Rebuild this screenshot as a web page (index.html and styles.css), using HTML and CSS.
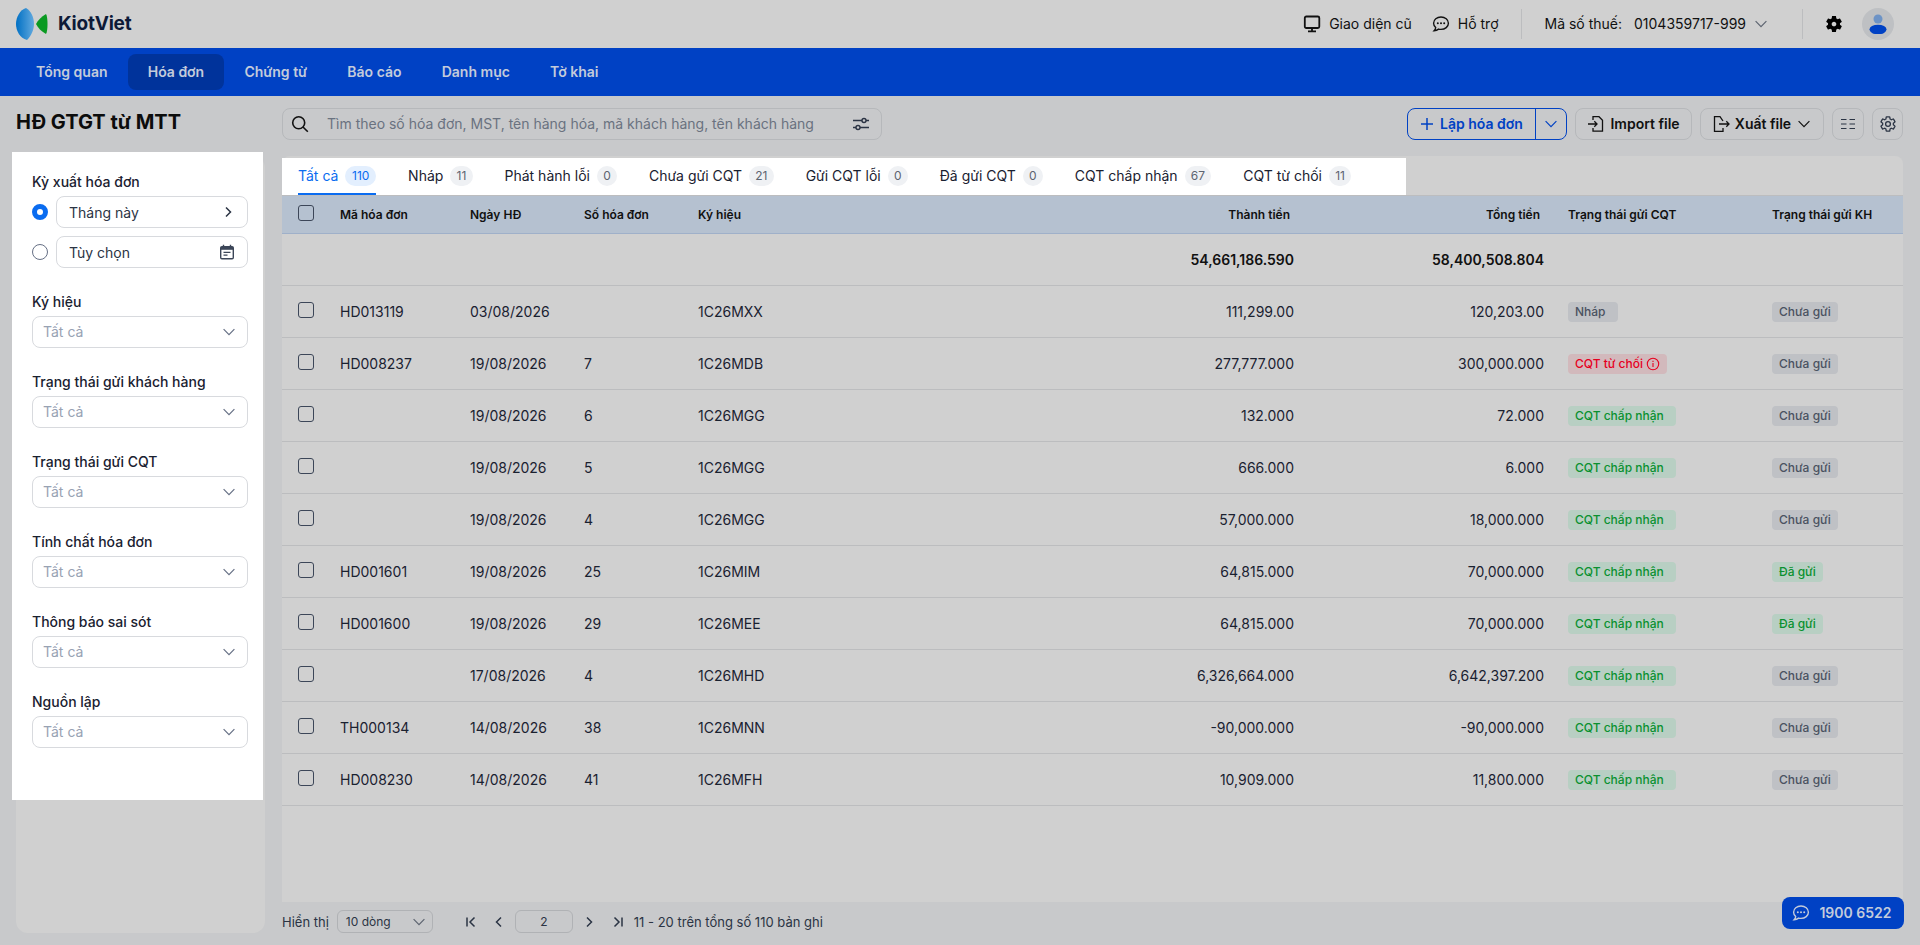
FILE: index.html
```html
<!DOCTYPE html>
<html lang="vi">
<head>
<meta charset="utf-8">
<title>HĐ GTGT từ MTT - KiotViet</title>
<link rel="stylesheet" href="styles.css">
</head>
<body>

<svg class="defs" width="0" height="0" aria-hidden="true">
	<symbol id="i-down" viewBox="0 0 12 12"><path d="M.6 3.200 6 8.600 11.400 3.200" fill="none" stroke="currentColor" stroke-width="1.200"/></symbol>
	<symbol id="i-right" viewBox="0 0 12 12"><path d="M3 1.500 7.500 6 3 10.500" fill="none" stroke="currentColor" stroke-width="1.500"/></symbol>
	<symbol id="i-left" viewBox="0 0 12 12"><path d="M8 1.500 3.500 6 8 10.500" fill="none" stroke="currentColor" stroke-width="1.500"/></symbol>
	<symbol id="i-chat" viewBox="0 0 18 18"><path d="M9 2C4.900 2 1.600 4.700 1.600 8.200c0 1.700.8 3.200 2.100 4.300-.1 1.200-.6 2.200-1.600 3.200 1.800 0 3.300-.6 4.500-1.600.7.2 1.500.3 2.400.3 4.100 0 7.400-2.700 7.400-6.200S13.100 2 9 2z" fill="none" stroke="currentColor" stroke-width="1.400"/><circle cx="5.800" cy="8.200" r="1" fill="currentColor"/><circle cx="9" cy="8.200" r="1" fill="currentColor"/><circle cx="12.200" cy="8.200" r="1" fill="currentColor"/></symbol>
</svg>

<!-- top bar -->
<header class="topbar">
	<div class="brand">
		<svg class="brand-logo" width="32" height="32" viewBox="0 0 32 32">
			<defs><linearGradient id="lens" x1="0" y1="0" x2="1" y2="0"><stop offset="0" stop-color="#0070c4"/><stop offset="1" stop-color="#62a9de"/></linearGradient></defs>
			<path d="M10 0C4 2 0 9 0 16s4 14 11 16C15 28 18 22 18 16 18 9 15 3 10 0z" fill="url(#lens)"/>
			<path d="M30 6C25 9 22 12 20 16c2 4 5 7 10 10 2-3 2-17 0-20z" fill="#0a9a22"/>
		</svg>
		<span class="brand-name">KiotViet</span>
	</div>
	<div class="topbar-right">
		<a class="top-link">
			<svg width="18" height="18" viewBox="0 0 18 18"><rect x="1.800" y="1.500" width="14.500" height="11.500" rx="1.500" fill="none" stroke="#111" stroke-width="1.800"/><path d="M9 13v3M5 16.300h8" stroke="#111" stroke-width="1.800"/></svg>
			Giao diện cũ
		</a>
		<a class="top-link">
			<svg class="ic-dark" width="18" height="18"><use href="#i-chat"/></svg>
			Hỗ trợ
		</a>
		<span class="top-divider"></span>
		<div class="tax">
			<span>Mã số thuế:</span>
			<span class="tax-no">0104359717-999</span>
			<svg class="ic-gray" width="12" height="12"><use href="#i-down"/></svg>
		</div>
		<span class="top-divider"></span>
		<svg class="top-gear" width="20" height="20" viewBox="0 0 24 24"><path fill-rule="evenodd" d="M19.140 12.940c.04-.3.06-.61.06-.94 0-.32-.02-.64-.07-.94l2.030-1.580c.18-.14.23-.41.12-.61l-1.920-3.320c-.12-.22-.37-.29-.59-.22l-2.390.96c-.5-.38-1.030-.7-1.620-.94l-.36-2.540c-.04-.24-.24-.41-.48-.41h-3.840c-.24 0-.43.17-.47.41l-.36 2.540c-.59.24-1.130.57-1.620.94l-2.390-.96c-.22-.08-.47 0-.59.22L2.740 8.870c-.12.21-.08.47.12.61l2.030 1.580c-.05.3-.09.63-.09.94s.02.64.07.94l-2.030 1.580c-.18.14-.23.41-.12.61l1.920 3.320c.12.22.37.29.59.22l2.390-.96c.5.38 1.030.7 1.620.94l.36 2.540c.05.24.24.41.48.41h3.840c.24 0 .44-.17.47-.41l.36-2.540c.59-.24 1.130-.56 1.620-.94l2.390.96c.22.08.47 0 .59-.22l1.920-3.320c.12-.22.07-.47-.12-.61l-2.010-1.580zM12 14.800c-1.540 0-2.800-1.260-2.800-2.800s1.260-2.800 2.800-2.800 2.800 1.260 2.800 2.800-1.260 2.800-2.800 2.800z"/></svg>
		<div class="avatar">
			<svg width="18" height="20" viewBox="0 0 18 20"><circle cx="9" cy="5" r="4.500" fill="#6d93c6"/><ellipse cx="9" cy="15.500" rx="8.500" ry="4.800" fill="#0041c4"/></svg>
		</div>
	</div>
</header>

<!-- main nav -->
<nav class="mainnav">
	<a class="nav-item">Tổng quan</a>
	<a class="nav-item active">Hóa đơn</a>
	<a class="nav-item">Chứng từ</a>
	<a class="nav-item">Báo cáo</a>
	<a class="nav-item">Danh mục</a>
	<a class="nav-item">Tờ khai</a>
</nav>

<div class="content">

	<!-- left column -->
	<aside class="side">
		<h1 class="page-title">HĐ GTGT từ MTT</h1>
		<div class="side-card">
			<div class="filter-panel">
				<div class="filter-first">
					<div class="filter-label">Kỳ xuất hóa đơn</div>
					<div class="radio-row">
						<span class="radio on"></span>
						<div class="field">
							<span>Tháng này</span>
							<svg class="ic-slate" width="12" height="12"><use href="#i-right"/></svg>
						</div>
					</div>
					<div class="radio-row">
						<span class="radio"></span>
						<div class="field">
							<span>Tùy chọn</span>
							<svg width="16" height="16" viewBox="0 0 16 16"><rect x="1.700" y="2.700" width="12.600" height="12" rx="1.200" fill="none" stroke="#3c4658" stroke-width="1.400"/><path d="M1.700 3h12.600v2.800H1.700z" fill="#3c4658"/><path d="M4.500.8v2.500M11.500.8v2.500" stroke="#3c4658" stroke-width="1.400"/><path d="M4.500 8.300h7M4.500 11.200h4" stroke="#3c4658" stroke-width="1.300"/></svg>
						</div>
					</div>
				</div>
				<div class="filter-group">
					<div class="filter-label">Ký hiệu</div>
					<div class="field select"><span>Tất cả</span><svg width="12" height="12"><use href="#i-down"/></svg></div>
				</div>
				<div class="filter-group">
					<div class="filter-label">Trạng thái gửi khách hàng</div>
					<div class="field select"><span>Tất cả</span><svg width="12" height="12"><use href="#i-down"/></svg></div>
				</div>
				<div class="filter-group">
					<div class="filter-label">Trạng thái gửi CQT</div>
					<div class="field select"><span>Tất cả</span><svg width="12" height="12"><use href="#i-down"/></svg></div>
				</div>
				<div class="filter-group">
					<div class="filter-label">Tính chất hóa đơn</div>
					<div class="field select"><span>Tất cả</span><svg width="12" height="12"><use href="#i-down"/></svg></div>
				</div>
				<div class="filter-group">
					<div class="filter-label">Thông báo sai sót</div>
					<div class="field select"><span>Tất cả</span><svg width="12" height="12"><use href="#i-down"/></svg></div>
				</div>
				<div class="filter-group">
					<div class="filter-label">Nguồn lập</div>
					<div class="field select"><span>Tất cả</span><svg width="12" height="12"><use href="#i-down"/></svg></div>
				</div>
			</div>
		</div>
	</aside>

	<!-- right column -->
	<main class="main">
		<div class="toolbar">
			<div class="search">
				<svg width="18" height="18" viewBox="0 0 18 18"><circle cx="7.700" cy="7.700" r="6" fill="none" stroke="#111" stroke-width="1.600"/><path d="M12 12l4.800 4.800" stroke="#111" stroke-width="1.600"/></svg>
				<span class="search-text">Tìm theo số hóa đơn, MST, tên hàng hóa, mã khách hàng, tên khách hàng</span>
				<svg width="18" height="18" viewBox="0 0 18 18" fill="none" stroke="#2b3444" stroke-width="1.400"><path d="M1 5.500h9M14 5.500h3M1 12.500h3M8 12.500h9"/><circle cx="12" cy="5.500" r="2"/><circle cx="6" cy="12.500" r="2"/></svg>
			</div>
			<div class="actions">
				<div class="btn-split">
					<a class="btn-create">
						<svg width="14" height="14" viewBox="0 0 14 14"><path d="M7 1v12M1 7h12" stroke="#0041c4" stroke-width="1.500"/></svg>
						Lập hóa đơn
					</a>
					<a class="btn-caret"><svg width="12" height="12"><use href="#i-down"/></svg></a>
				</div>
				<a class="btn btn-import">
					<svg width="18" height="18" viewBox="0 0 18 18" fill="none" stroke="#111" stroke-width="1.300"><path d="M6 5V1.700h6l3.500 3.500v11H6V13"/><path d="M1 9h9M7.300 6.300 10 9l-2.700 2.700"/></svg>
					Import file
				</a>
				<a class="btn btn-export">
					<svg width="18" height="18" viewBox="0 0 18 18" fill="none" stroke="#111" stroke-width="1.300"><path d="M11 6 8 1.700H2.500v14.600H11V13"/><path d="M7 9h10M14.300 6.300 17 9l-2.700 2.700"/></svg>
					Xuất file
					<svg class="export-caret" width="12" height="12"><use href="#i-down"/></svg>
				</a>
				<a class="btn btn-icon">
					<svg width="14" height="12" viewBox="0 0 14 12" stroke="#2b3444" stroke-width="1.200"><path d="M0 1.500h5.500M8.500 1.500H14M0 6h5.500M8.500 6H14M0 10.500h5.500M8.500 10.500H14"/></svg>
				</a>
				<a class="btn btn-icon btn-gear">
					<svg width="18" height="18" viewBox="0 0 24 24" fill="none" stroke="#2b3444" stroke-width="1.700"><path d="M19.140 12.940c.04-.3.06-.61.06-.94 0-.32-.02-.64-.07-.94l2.030-1.580c.18-.14.23-.41.12-.61l-1.920-3.320c-.12-.22-.37-.29-.59-.22l-2.390.96c-.5-.38-1.030-.7-1.620-.94l-.36-2.540c-.04-.24-.24-.41-.48-.41h-3.840c-.24 0-.43.17-.47.41l-.36 2.540c-.59.24-1.130.57-1.620.94l-2.390-.96c-.22-.08-.47 0-.59.22L2.740 8.870c-.12.21-.08.47.12.61l2.030 1.580c-.05.3-.09.63-.09.94s.02.64.07.94l-2.030 1.580c-.18.14-.23.41-.12.61l1.920 3.320c.12.22.37.29.59.22l2.390-.96c.5.38 1.030.7 1.620.94l.36 2.540c.05.24.24.41.48.41h3.840c.24 0 .44-.17.47-.41l.36-2.540c.59-.24 1.130-.56 1.620-.94l2.390.96c.22.08.47 0 .59-.22l1.920-3.320c.12-.22.07-.47-.12-.61l-2.010-1.580z"/><circle cx="12" cy="12" r="3.200"/></svg>
				</a>
			</div>
		</div>

		<section class="panel">
			<div class="tabs">
				<a class="tab active">Tất cả <span class="count">110</span></a>
				<a class="tab">Nháp <span class="count">11</span></a>
				<a class="tab">Phát hành lỗi <span class="count">0</span></a>
				<a class="tab">Chưa gửi CQT <span class="count">21</span></a>
				<a class="tab">Gửi CQT lỗi <span class="count">0</span></a>
				<a class="tab">Đã gửi CQT <span class="count">0</span></a>
				<a class="tab">CQT chấp nhận <span class="count">67</span></a>
				<a class="tab">CQT từ chối <span class="count">11</span></a>
			</div>
			<table class="grid">
				<colgroup>
					<col class="c-check"><col class="c-code"><col class="c-date"><col class="c-no"><col class="c-sign"><col class="c-amount"><col class="c-total"><col class="c-cqt"><col class="c-kh">
				</colgroup>
				<thead>
					<tr>
						<th class="check"><span class="box"></span></th>
						<th>Mã hóa đơn</th>
						<th>Ngày HĐ</th>
						<th>Số hóa đơn</th>
						<th>Ký hiệu</th>
						<th class="num">Thành tiền</th>
						<th class="num">Tổng tiền</th>
						<th class="cqt">Trạng thái gửi CQT</th>
						<th>Trạng thái gửi KH</th>
					</tr>
				</thead>
				<tbody>
					<tr class="sum">
						<td></td><td></td><td></td><td></td><td></td>
						<td class="num">54,661,186.590</td>
						<td class="num">58,400,508.804</td>
						<td></td><td></td>
					</tr>
					<tr>
						<td class="check"><span class="box"></span></td>
						<td>HD013119</td><td>03/08/2026</td><td></td><td>1C26MXX</td>
						<td class="num">111,299.00</td><td class="num">120,203.00</td>
						<td class="cqt"><span class="tag gray wide">Nháp</span></td>
						<td><span class="tag gray">Chưa gửi</span></td>
					</tr>
					<tr>
						<td class="check"><span class="box"></span></td>
						<td>HD008237</td><td>19/08/2026</td><td>7</td><td>1C26MDB</td>
						<td class="num">277,777.000</td><td class="num">300,000.000</td>
						<td class="cqt"><span class="tag red">CQT từ chối
							<svg width="14" height="14" viewBox="0 0 14 14" fill="none" stroke="#e6001e" stroke-width="1.100"><circle cx="7" cy="7" r="5.700"/><path d="M7 6v4M7 3.800v1.200"/></svg>
						</span></td>
						<td><span class="tag gray">Chưa gửi</span></td>
					</tr>
					<tr>
						<td class="check"><span class="box"></span></td>
						<td></td><td>19/08/2026</td><td>6</td><td>1C26MGG</td>
						<td class="num">132.000</td><td class="num">72.000</td>
						<td class="cqt"><span class="tag green wide">CQT chấp nhận</span></td>
						<td><span class="tag gray">Chưa gửi</span></td>
					</tr>
					<tr>
						<td class="check"><span class="box"></span></td>
						<td></td><td>19/08/2026</td><td>5</td><td>1C26MGG</td>
						<td class="num">666.000</td><td class="num">6.000</td>
						<td class="cqt"><span class="tag green wide">CQT chấp nhận</span></td>
						<td><span class="tag gray">Chưa gửi</span></td>
					</tr>
					<tr>
						<td class="check"><span class="box"></span></td>
						<td></td><td>19/08/2026</td><td>4</td><td>1C26MGG</td>
						<td class="num">57,000.000</td><td class="num">18,000.000</td>
						<td class="cqt"><span class="tag green wide">CQT chấp nhận</span></td>
						<td><span class="tag gray">Chưa gửi</span></td>
					</tr>
					<tr>
						<td class="check"><span class="box"></span></td>
						<td>HD001601</td><td>19/08/2026</td><td>25</td><td>1C26MIM</td>
						<td class="num">64,815.000</td><td class="num">70,000.000</td>
						<td class="cqt"><span class="tag green wide">CQT chấp nhận</span></td>
						<td><span class="tag green">Đã gửi</span></td>
					</tr>
					<tr>
						<td class="check"><span class="box"></span></td>
						<td>HD001600</td><td>19/08/2026</td><td>29</td><td>1C26MEE</td>
						<td class="num">64,815.000</td><td class="num">70,000.000</td>
						<td class="cqt"><span class="tag green wide">CQT chấp nhận</span></td>
						<td><span class="tag green">Đã gửi</span></td>
					</tr>
					<tr>
						<td class="check"><span class="box"></span></td>
						<td></td><td>17/08/2026</td><td>4</td><td>1C26MHD</td>
						<td class="num">6,326,664.000</td><td class="num">6,642,397.200</td>
						<td class="cqt"><span class="tag green wide">CQT chấp nhận</span></td>
						<td><span class="tag gray">Chưa gửi</span></td>
					</tr>
					<tr>
						<td class="check"><span class="box"></span></td>
						<td>TH000134</td><td>14/08/2026</td><td>38</td><td>1C26MNN</td>
						<td class="num">-90,000.000</td><td class="num">-90,000.000</td>
						<td class="cqt"><span class="tag green wide">CQT chấp nhận</span></td>
						<td><span class="tag gray">Chưa gửi</span></td>
					</tr>
					<tr>
						<td class="check"><span class="box"></span></td>
						<td>HD008230</td><td>14/08/2026</td><td>41</td><td>1C26MFH</td>
						<td class="num">10,909.000</td><td class="num">11,800.000</td>
						<td class="cqt"><span class="tag green wide">CQT chấp nhận</span></td>
						<td><span class="tag gray">Chưa gửi</span></td>
					</tr>
				</tbody>
			</table>
		</section>

		<div class="pager">
			<span>Hiển thị</span>
			<div class="page-size"><span>10 dòng</span><svg width="12" height="12"><use href="#i-down"/></svg></div>
			<div class="page-nav">
				<svg width="12" height="12" viewBox="0 0 12 12" fill="none" stroke="#2b3444" stroke-width="1.500"><path d="M2 1.500v9M9.500 1.500 5 6l4.500 4.500"/></svg>
				<svg class="ic-slate" width="12" height="12"><use href="#i-left"/></svg>
				<div class="page-input">2</div>
				<svg class="ic-slate" width="12" height="12"><use href="#i-right"/></svg>
				<svg width="12" height="12" viewBox="0 0 12 12" fill="none" stroke="#2b3444" stroke-width="1.500"><path d="M10 1.500v9M2.500 1.500 7 6l-4.500 4.500"/></svg>
			</div>
			<span class="page-info">11 - 20 trên tổng số 110 bản ghi</span>
		</div>
	</main>
</div>

<a class="hotline">
	<svg width="18" height="18"><use href="#i-chat"/></svg>
	1900 6522
</a>

</body>
</html>
```

FILE: styles.css
```css
/* Reset */
* {
	margin:0;
	padding:0;
	box-sizing:border-box;
}
html, body {
	height:100%;
	overflow:hidden;
}
body {
	background:#c8c9cb;
	color:#1a2130;
	font:14px/20px Inter, "Noto Sans", "Liberation Sans", sans-serif;
	display:flex;
	flex-direction:column;
}
a {
	color:inherit;
	text-decoration:none;
}
svg {
	flex:none;
	display:block;
}
.defs {
	position:absolute;
}

/* Top bar */
.topbar {
	height:48px;
	flex:none;
	background:#d0d0d0;
	display:flex;
	align-items:center;
	justify-content:space-between;
	padding:0 26px 0 16px;
}
.brand {
	display:flex;
	align-items:center;
	gap:10px;
}
.brand-name {
	font-size:19px;
	font-weight:700;
	color:#0d1a38;
	letter-spacing:-.2px;
}
.topbar-right {
	display:flex;
	align-items:center;
}
.top-link {
	display:flex;
	align-items:center;
	gap:8px;
	margin-right:20px;
	color:#111;
}
.top-divider {
	width:1px;
	height:30px;
	background:#bcbdbf;
}
.topbar-right .top-link + .top-divider {
	margin-left:2px;
}
.tax {
	display:flex;
	align-items:center;
	gap:12px;
	margin:0 35px 0 23px;
	color:#111;
}
.tax svg {
	margin-left:-3px;
}
.ic-gray {
	color:#5d6470;
}
.ic-dark {
	color:#111;
}
.ic-slate {
	color:#2b3444;
}
.top-gear {
	margin-left:21px;
	margin-right:18px;
}
.avatar {
	width:32px;
	height:32px;
	border-radius:50%;
	background:#bec0c3;
	display:flex;
	align-items:center;
	justify-content:center;
}

/* Main nav */
.mainnav {
	height:48px;
	flex:none;
	background:#0041c4;
	display:flex;
	align-items:center;
	padding-left:16px;
}
.nav-item {
	height:36px;
	line-height:36px;
	padding:0 20.100px;
	border-radius:8px;
	color:#c3cbdb;
	font-weight:600;
}
.nav-item.active {
	background:#00339b;
}

/* Page */
.content {
	flex:1;
	min-height:0;
	display:flex;
	gap:17px;
	padding:12px 17px 12px 16px;
}
.side {
	width:249px;
	flex:none;
	display:flex;
	flex-direction:column;
	gap:16px;
}
.page-title {
	height:32px;
	font-size:20px;
	line-height:28px;
	font-weight:700;
	color:#0c0c0c;
}
.side-card {
	flex:1;
	background:#d0d0d0;
	border-radius:12px;
}
.filter-panel {
	width:251px;
	height:648px;
	margin:-4px 0 0 -4px;
	padding:20px 15px 0 20px;
	background:#fff;
}
.filter-label {
	font-weight:500;
	color:#1a2130;
	line-height:20px;
}
.filter-first .filter-label {
	margin-bottom:4px;
}
.radio-row {
	display:flex;
	align-items:center;
	gap:8px;
	margin-bottom:8px;
}
.radio-row span:not(.radio) {
	padding-top:2px;
}
.radio {
	width:16px;
	height:16px;
	flex:none;
	border-radius:50%;
	border:1px solid #667085;
	background:#fff;
}
.radio.on {
	border:5px solid #0a6cf0;
}
.field {
	flex:1;
	height:32px;
	border:1px solid #d8dade;
	border-radius:8px;
	display:flex;
	align-items:center;
	justify-content:space-between;
	padding:0 12px;
	color:#2b3444;
}
.select {
	padding-left:10px;
	color:#98a2b3;
}
.select svg {
	color:#667085;
}
.filter-group {
	margin-top:24px;
}
.filter-group .filter-label {
	height:24px;
}

/* Toolbar */
.main {
	flex:1;
	min-width:0;
	display:flex;
	flex-direction:column;
	gap:16px;
}
.toolbar {
	height:32px;
	flex:none;
	display:flex;
	justify-content:space-between;
}
.search {
	width:600px;
	border:1px solid #b6b8bb;
	border-radius:8px;
	display:flex;
	align-items:center;
	padding:0 11px 0 8px;
}
.search-text {
	flex:1;
	padding-left:18px;
	color:#6a7280;
}
.actions {
	display:flex;
	gap:8px;
}
.btn-split {
	width:160px;
	display:flex;
	border:1px solid #0041c4;
	border-radius:8px;
	color:#0041c4;
	font-weight:600;
}
.btn-create {
	flex:1;
	display:flex;
	align-items:center;
	gap:6px;
	padding-left:12px;
	border-right:1px solid #0041c4;
}
.btn-caret {
	width:30px;
	display:flex;
	align-items:center;
	justify-content:center;
}
.btn {
	display:flex;
	align-items:center;
	justify-content:center;
	gap:5px;
	border:1px solid #b6b8bb;
	border-radius:8px;
	color:#111;
	font-weight:600;
}
.btn-import {
	width:117px;
}
.btn-export {
	width:124px;
	padding-right:2px;
}
.export-caret {
	margin-left:2px;
}
.btn-icon {
	width:32px;
}
.btn-gear {
	width:31px;
}

/* Panel, tabs */
.panel {
	flex:1;
	min-height:0;
	background:#d0d0d0;
	border-radius:8px 8px 0 0;
	padding-top:2px;
}
.tabs {
	width:1124px;
	height:37px;
	background:#fff;
	display:flex;
	gap:32px;
	padding-left:16px;
}
.tab {
	height:37px;
	display:flex;
	align-items:center;
	gap:7px;
	padding-bottom:2px;
	color:#1a2130;
}
.tab.active {
	color:#0a6cf0;
	border-bottom:2px solid #0a6cf0;
	padding-bottom:0;
}
.count {
	min-width:20px;
	height:20px;
	padding:0 6.200px;
	border-radius:10px;
	background:#eff1f4;
	color:#5d6470;
	font-size:12px;
	line-height:20px;
	text-align:center;
}
.tab.active .count {
	padding:0 6.700px;
	background:#e3effe;
	color:#0a6cf0;
}

/* Table */
.grid {
	width:100%;
	table-layout:fixed;
	border-collapse:collapse;
	border-top:1px solid #bcbdbf;
}
.c-check { width:50px; }
.c-code { width:130px; }
.c-date { width:114px; }
.c-no { width:114px; }
.c-sign { width:200px; }
.c-amount { width:412px; }
.c-total { width:250px; }
.c-cqt { width:212px; }
.c-kh { width:139px; }
.grid th {
	height:38px;
	background:#b5c1d0;
	border-bottom:1px solid #9fb0c9;
	padding:0 8px;
	text-align:left;
	font-size:12px;
	font-weight:600;
	color:#111;
}
.grid th.num {
	text-align:right;
	padding-right:12px;
}
.grid td {
	height:52px;
	border-bottom:1px solid #bcbdbf;
	padding:0 8px;
	color:#1a2130;
}
.grid td.num {
	text-align:right;
}
.grid .cqt {
	padding-left:16px;
}
.sum td {
	font-weight:600;
	color:#111;
}
.grid .check {
	padding-left:16px;
}
.box {
	display:block;
	width:16px;
	height:16px;
	margin-bottom:4px;
	border:1px solid #3c4658;
	border-radius:3px;
}
.tag {
	display:inline-flex;
	align-items:center;
	gap:3px;
	height:20px;
	padding:0 7px;
	border-radius:4px;
	font-size:12px;
	font-weight:500;
	vertical-align:middle;
}
.tag.gray {
	background:#bfc1c5;
	color:#4a5261;
}
.tag.green {
	background:#b8cfc3;
	color:#0a9130;
}
.tag.wide {
	padding-right:12px;
}
.tag.red {
	background:#d2b9bc;
	color:#e6001e;
}

/* Pager */
.pager {
	height:23px;
	flex:none;
	margin-top:-8px;
	display:flex;
	align-items:center;
	font-size:13px;
	color:#2b3444;
}
.page-size {
	width:96px;
	height:23px;
	margin-left:8px;
	padding:0 7px 0 8px;
	border:1px solid #b0b2b5;
	border-radius:6px;
	display:flex;
	align-items:center;
	justify-content:space-between;
	font-size:12px;
}
.page-size svg {
	color:#5d6470;
}
.page-nav {
	display:flex;
	align-items:center;
	gap:16px;
	margin-left:32px;
}
.page-input {
	width:58px;
	height:23px;
	margin:0 -5px 0 -6px;
	border:1px solid #b0b2b5;
	border-radius:6px;
	text-align:center;
	line-height:21px;
	font-size:12px;
}
.page-info {
	margin-left:10px;
}

/* Hotline */
.hotline {
	position:fixed;
	left:1782px;
	top:897px;
	width:122px;
	height:32px;
	padding-right:2px;
	border-radius:8px;
	background:#0041c4;
	color:#c3cbdb;
	font-weight:600;
	display:flex;
	align-items:center;
	justify-content:center;
	gap:9px;
}
```
